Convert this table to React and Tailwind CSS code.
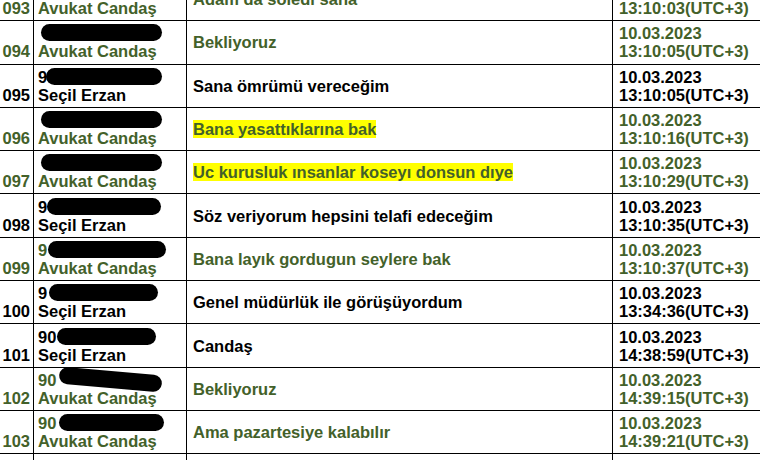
const GREEN = "text-[#43612a]";

const rows = [
  { no: "093", name: "Avukat Candaş", av: true, msg: "Adam da soledi sana", date: "10.03.2023", time: "13:10:03(UTC+3)", prefix: "", blob: "left-[3px] w-[121px]" },
  { no: "094", name: "Avukat Candaş", av: true, msg: "Bekliyoruz", date: "10.03.2023", time: "13:10:05(UTC+3)", prefix: "", blob: "left-[3px] w-[121px]" },
  { no: "095", name: "Seçil Erzan", av: false, msg: "Sana ömrümü vereceğim", date: "10.03.2023", time: "13:10:05(UTC+3)", prefix: "9", blob: "left-[8px] w-[116px]" },
  { no: "096", name: "Avukat Candaş", av: true, msg: "Bana yasattıklarına bak", hl: true, date: "10.03.2023", time: "13:10:16(UTC+3)", prefix: "", blob: "left-[3px] w-[121px]" },
  { no: "097", name: "Avukat Candaş", av: true, msg: "Uc kurusluk ınsanlar koseyı donsun dıye", hl: true, date: "10.03.2023", time: "13:10:29(UTC+3)", prefix: "", blob: "left-[3px] w-[121px]" },
  { no: "098", name: "Seçil Erzan", av: false, msg: "Söz veriyorum hepsini telafi edeceğim", date: "10.03.2023", time: "13:10:35(UTC+3)", prefix: "9", blob: "left-[9px] w-[114px]" },
  { no: "099", name: "Avukat Candaş", av: true, msg: "Bana layık gordugun seylere bak", date: "10.03.2023", time: "13:10:37(UTC+3)", prefix: "9", blob: "left-[10px] w-[118px]" },
  { no: "100", name: "Seçil Erzan", av: false, msg: "Genel müdürlük ile görüşüyordum", date: "10.03.2023", time: "13:34:36(UTC+3)", prefix: "9", blob: "left-[11px] w-[109px]" },
  { no: "101", name: "Seçil Erzan", av: false, msg: "Candaş", date: "10.03.2023", time: "14:38:59(UTC+3)", prefix: "90", blob: "left-[19px] w-[99px]" },
  { no: "102", name: "Avukat Candaş", av: true, msg: "Bekliyoruz", date: "10.03.2023", time: "14:39:15(UTC+3)", prefix: "90", blob: "left-[21px] w-[103px] rotate-[5deg]" },
  { no: "103", name: "Avukat Candaş", av: true, msg: "Ama pazartesiye kalabılır", date: "10.03.2023", time: "14:39:21(UTC+3)", prefix: "90", blob: "left-[21px] w-[105px]" },
];

function Row({ r }) {
  const color = r.av ? GREEN : "text-black";
  return (
    <div className={`flex h-[43.3px] border-b border-black ${color}`}>
      <div className="w-[34px] shrink-0 border-r border-black flex flex-col justify-center items-end pr-[3px]">
        <div className="h-[18px]" />
        <div className="h-[18px] whitespace-nowrap">{r.no}</div>
      </div>
      <div className="w-[153px] shrink-0 border-r border-black flex flex-col justify-center pl-[4px]">
        <div className="relative h-[18px] whitespace-nowrap">
          {r.prefix}
          <span className={`absolute top-0 h-[17px] rounded-full bg-black ${r.blob}`} />
        </div>
        <div className="h-[18px] whitespace-nowrap">{r.name}</div>
      </div>
      <div className="w-[426px] shrink-0 border-r border-black flex items-center pl-[6px]">
        <span className={`whitespace-nowrap leading-[18px] ${r.hl ? "bg-[#ffff00]" : ""}`}>{r.msg}</span>
      </div>
      <div className="flex-1 flex flex-col justify-center pl-[6px]">
        <div className="h-[18px] whitespace-nowrap">{r.date}</div>
        <div className="h-[18px] whitespace-nowrap">{r.time}</div>
      </div>
    </div>
  );
}

export default function App() {
  return (
    <div className="w-[760px] h-[460px] overflow-hidden bg-white font-['Liberation_Sans',Arial,sans-serif] font-bold text-[16.5px] leading-[18px]">
      <div className="-mt-[22px]">
        {rows.map((r) => (
          <Row key={r.no} r={r} />
        ))}
        <div className="flex h-[43px]">
          <div className="w-[34px] shrink-0 border-r border-black" />
          <div className="w-[153px] shrink-0 border-r border-black" />
          <div className="w-[426px] shrink-0 border-r border-black" />
          <div className="flex-1" />
        </div>
      </div>
    </div>
  );
}
